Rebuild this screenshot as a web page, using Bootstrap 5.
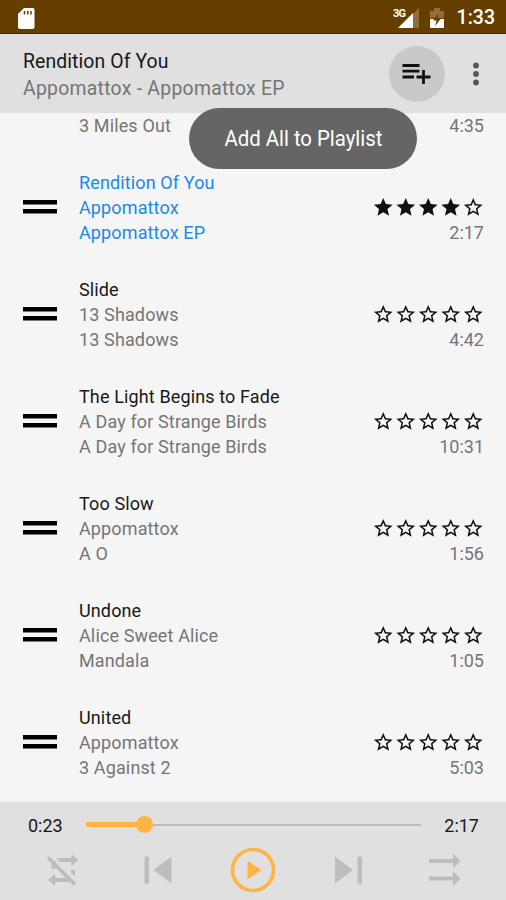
<!DOCTYPE html>
<html lang="en">
<head>
<meta charset="utf-8">
<meta name="viewport" content="width=device-width, initial-scale=1">
<title>Music player</title>
<link href="https://cdn.jsdelivr.net/npm/bootstrap@5.3.0/dist/css/bootstrap.min.css" rel="stylesheet">
<style>
body{font-family:Roboto,"Liberation Sans",sans-serif;background:#f5f5f5;color:#181818;font-size:18px}
.screen{width:506px;height:900px}
.statusbar{height:34px;background:#653e00;border-bottom:1px solid #6b1000;padding:0 11px 0 17px}
.clock{font-size:19.5px;font-weight:500;line-height:34px;padding-top:3px}
.topbar{height:79px;background:#e0e0e0;padding:0 23px 0 23px}
.song{font-size:19.4px;line-height:27px;letter-spacing:.1px;padding-top:2px}
.artist{font-size:19.4px;line-height:27px;letter-spacing:.26px;color:#757575}
.round{width:56px;height:56px;background:#c9c9c9}
.tracks{height:689px}
.track{height:107px;padding:16px 22px 0 23px;line-height:25px}
.track.partial{height:41px;padding-top:0}
.meta{width:250px;margin-left:22px;letter-spacing:.13px}
.soft{color:#757575}
.current,.current .soft-line{color:#1e88e5}
.soft-line{color:#757575}
.side{padding-top:25px}
.stars{width:112px;height:25px}
.handle{margin-top:30px}
.tip{left:189px;top:108px;width:228px;height:61px;background:#656565;color:#fff;font-size:22px}
.tip span{transform:scaleX(.925);white-space:nowrap}
.player{height:98px;background:#e0e0e0}
.times{height:46px;padding:0 27px 0 28px}
.seek{height:2px;background:#bdbdbd;width:335px}
.fill{height:5px;top:-2px;left:0;width:17.5%;background:#ffb443}
.knob{width:17px;height:17px;top:-8px;left:50px;background:#ffb443}
.controls{height:52px;padding:0 38px 8px}
.controls svg{color:#bdbdbd}
</style>
<script src="https://cdn.jsdelivr.net/npm/bootstrap@5.3.0/dist/js/bootstrap.bundle.min.js"></script>
</head>
<body>
<svg class="d-none">
<symbol id="full" viewBox="0 0 24 24"><path d="M12 17.27 18.18 21l-1.64-7.03L22 9.24l-7.19-.61L12 2 9.19 8.63 2 9.24l5.46 4.73L5.82 21z"/></symbol>
<symbol id="empty" viewBox="0 0 24 24"><path d="m22 9.24-7.19-.62L12 2 9.19 8.63 2 9.24l5.46 4.73L5.82 21 12 17.27 18.18 21l-1.63-7.03L22 9.24zM12 15.4l-3.76 2.27 1-4.28-3.32-2.88 4.38-.38L12 6.1l1.71 4.04 4.38.38-3.32 2.88 1 4.28L12 15.4z"/></symbol>
<symbol id="rate0" viewBox="0 0 112 25"><use href="#empty" x="0" y="1" width="22.500" height="22.500"/><use href="#empty" x="22.5" y="1" width="22.500" height="22.500"/><use href="#empty" x="45" y="1" width="22.500" height="22.500"/><use href="#empty" x="67.5" y="1" width="22.500" height="22.500"/><use href="#empty" x="90" y="1" width="22.500" height="22.500"/></symbol>
<symbol id="rate4" viewBox="0 0 112 25"><use href="#full" x="0" y="1" width="22.500" height="22.500"/><use href="#full" x="22.5" y="1" width="22.500" height="22.500"/><use href="#full" x="45" y="1" width="22.500" height="22.500"/><use href="#full" x="67.5" y="1" width="22.500" height="22.500"/><use href="#empty" x="90" y="1" width="22.500" height="22.500"/></symbol>
<symbol id="grip" viewBox="0 0 34 14"><path d="M0 0h34v4.500H0zM0 9h34v4.500H0z"/></symbol>
</svg>
<div class="screen position-relative d-flex flex-column overflow-hidden">
  <div class="statusbar d-flex align-items-center flex-shrink-0 text-white">
    <svg class="mt-1" width="18" height="21" viewBox="0 0 18 21"><path fill="#fff" d="M7 0h9q1.500 0 1.500 2v17q0 2-2 2H3q-2 0-2-2V6z"/><path stroke="#653e00" stroke-width="1.500" d="M7.500 3v3.500M10.800 3v3.500M14 3v3.500"/></svg>
    <svg class="ms-auto mt-1" width="28" height="22" viewBox="0 0 28 22"><path fill="#936c3c" d="M20 6 26 0v20h-6z"/><path fill="#fff" d="M5 20 20 5v15z"/><text x="0" y="9" fill="#fff" font-family="Roboto" font-weight="700" font-size="11" textLength="13">3G</text></svg>
    <svg class="ms-2 me-2 mt-1" width="16" height="22" viewBox="0 0 16 22"><path fill="#936c3c" d="M1 3h4V0h6v3h4v7H1z"/><path fill="#fff" d="M1 11h14v8q0 1-1 1H2q-1 0-1-1z"/><path fill="#653e00" d="m10 5-6 7.500h3.500L6 18l6-7.500H8.500z"/></svg>
    <span class="clock ms-1">1:33</span>
  </div>
  <header class="topbar d-flex align-items-center flex-shrink-0">
    <div class="flex-grow-1"><div class="song">Rendition Of You</div><div class="artist">Appomattox - Appomattox EP</div></div>
    <div class="round rounded-circle d-flex align-items-center justify-content-center">
      <svg width="30" height="22" viewBox="0 0 30 22" fill="none" stroke="#111" stroke-width="2.800"><path d="M.5 2.500h17M.5 8.200h17M.5 14h11.500M14.500 14h14M21.500 7v14"/></svg>
    </div>
    <svg class="ms-4" width="14" height="24" viewBox="0 0 14 24" fill="#555"><circle cx="7" cy="3.500" r="2.900"/><circle cx="7" cy="12" r="2.900"/><circle cx="7" cy="20.500" r="2.900"/></svg>
  </header>
  <main class="tracks overflow-hidden flex-shrink-0">
    <div class="track partial d-flex"><div class="meta ms-0 ps-3"><div class="soft-line ms-4 ps-3">3 Miles Out</div></div><div class="ms-auto soft">4:35</div></div>
    <div class="track d-flex current"><svg class="handle" width="34" height="14" fill="#000"><use href="#grip"/></svg><div class="meta"><div>Rendition Of You</div><div class="soft-line">Appomattox</div><div class="soft-line">Appomattox EP</div></div><div class="side ms-auto d-flex flex-column align-items-end soft"><svg class="stars" fill="#111"><use href="#rate4"/></svg><span>2:17</span></div></div>
    <div class="track d-flex"><svg class="handle" width="34" height="14"><use href="#grip"/></svg><div class="meta"><div>Slide</div><div class="soft-line">13 Shadows</div><div class="soft-line">13 Shadows</div></div><div class="side ms-auto d-flex flex-column align-items-end soft"><svg class="stars" fill="#111"><use href="#rate0"/></svg><span>4:42</span></div></div>
    <div class="track d-flex"><svg class="handle" width="34" height="14"><use href="#grip"/></svg><div class="meta"><div>The Light Begins to Fade</div><div class="soft-line">A Day for Strange Birds</div><div class="soft-line">A Day for Strange Birds</div></div><div class="side ms-auto d-flex flex-column align-items-end soft"><svg class="stars" fill="#111"><use href="#rate0"/></svg><span>10:31</span></div></div>
    <div class="track d-flex"><svg class="handle" width="34" height="14"><use href="#grip"/></svg><div class="meta"><div>Too Slow</div><div class="soft-line">Appomattox</div><div class="soft-line">A O</div></div><div class="side ms-auto d-flex flex-column align-items-end soft"><svg class="stars" fill="#111"><use href="#rate0"/></svg><span>1:56</span></div></div>
    <div class="track d-flex"><svg class="handle" width="34" height="14"><use href="#grip"/></svg><div class="meta"><div>Undone</div><div class="soft-line">Alice Sweet Alice</div><div class="soft-line">Mandala</div></div><div class="side ms-auto d-flex flex-column align-items-end soft"><svg class="stars" fill="#111"><use href="#rate0"/></svg><span>1:05</span></div></div>
    <div class="track d-flex"><svg class="handle" width="34" height="14"><use href="#grip"/></svg><div class="meta"><div>United</div><div class="soft-line">Appomattox</div><div class="soft-line">3 Against 2</div></div><div class="side ms-auto d-flex flex-column align-items-end soft"><svg class="stars" fill="#111"><use href="#rate0"/></svg><span>5:03</span></div></div>
  </main>
  <footer class="player flex-shrink-0">
    <div class="times d-flex align-items-center justify-content-between">
      <span>0:23</span>
      <div class="seek position-relative"><div class="fill position-absolute"></div><div class="knob position-absolute rounded-circle"></div></div>
      <span>2:17</span>
    </div>
    <div class="controls d-flex align-items-center justify-content-between">
      <svg width="48" height="44" viewBox="0 0 48 44" fill="none" stroke="currentColor" stroke-width="4"><path d="M17 12h17M15.500 14v7M15 32h17M35 22v6"/><path fill="currentColor" stroke="none" d="M33.500 6l7 6-7 6zM17 26l-7 6 7 6z"/><path stroke="#e0e0e0" stroke-width="2.500" d="m14 7.500 26 26"/><path stroke-width="3.500" d="m10 9.500 27 27"/></svg>
      <svg width="48" height="44" viewBox="0 0 48 44" fill="currentColor"><path d="M10.500 8.500h4.500v27h-4.500zM37.500 8.500v27l-18-13.500z"/></svg>
      <svg width="46" height="46" viewBox="0 0 46 46"><circle cx="23" cy="23" r="20.500" fill="none" stroke="#ffb443" stroke-width="3.600"/><path fill="#ffb443" d="m17.500 13.500 14 9.500-14 9.500z"/></svg>
      <svg width="48" height="44" viewBox="0 0 48 44" fill="currentColor"><path d="M33.500 8.500H38v27h-4.500zM11 8.500v27L29 22z"/></svg>
      <svg width="48" height="44" viewBox="0 0 48 44" fill="currentColor"><path d="M9 11h24V5.500l7.500 7.500-7.500 7.500V15H9zM9 28.500h24V23l7.500 7.500L33 38v-5.500H9z"/></svg>
    </div>
  </footer>
  <div class="tip position-absolute rounded-pill d-flex align-items-center justify-content-center"><span>Add All to Playlist</span></div>
</div>
</body>
</html>
